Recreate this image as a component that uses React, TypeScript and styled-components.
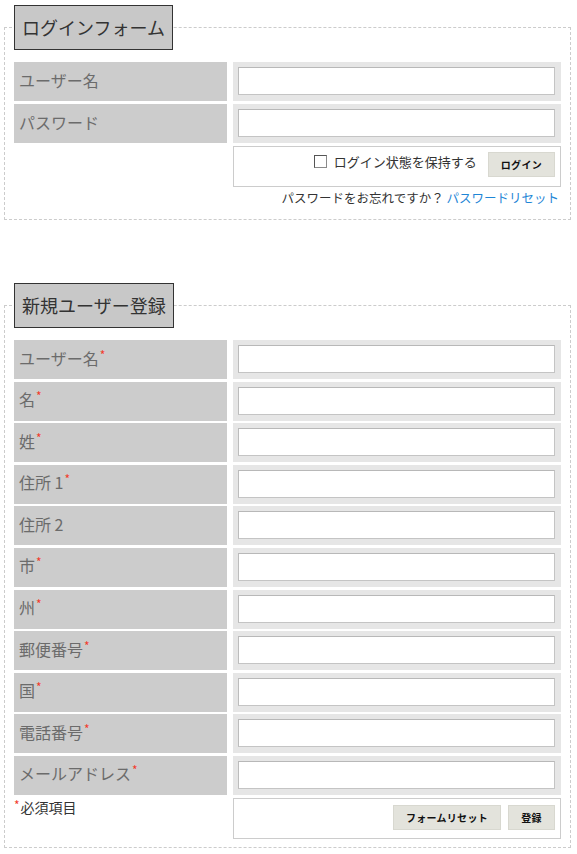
import React from "react";
import styled, { createGlobalStyle } from "styled-components";

const GlobalStyle = createGlobalStyle`
  html, body {
    margin: 0;
    padding: 0;
    background: #ffffff;
  }
  body {
    font-family: "Noto Sans CJK JP", "Noto Sans", sans-serif;
    color: #333333;
  }
`;

interface Field {
  label: string;
  required?: boolean;
}

const registerFields: Field[] = [
  { label: "ユーザー名", required: true },
  { label: "名", required: true },
  { label: "姓", required: true },
  { label: "住所 1", required: true },
  { label: "住所 2" },
  { label: "市", required: true },
  { label: "州", required: true },
  { label: "郵便番号", required: true },
  { label: "国", required: true },
  { label: "電話番号", required: true },
  { label: "メールアドレス", required: true },
];

const App = () => {
  return (
    <Page>
      <GlobalStyle />
      <FormBox $bottom={12}>
        <Legend>ログインフォーム</Legend>
        <Rows $gap={3}>
          <Row>
            <LabelCell>ユーザー名</LabelCell>
            <InputCell>
              <TextInput type="text" />
            </InputCell>
          </Row>
          <Row>
            <LabelCell>パスワード</LabelCell>
            <InputCell>
              <TextInput type="password" />
            </InputCell>
          </Row>
          <Row $auto>
            <div />
            <ActionBox>
              <CheckLabel>
                <CheckBox />
                ログイン状態を保持する
              </CheckLabel>
              <Button>ログイン</Button>
            </ActionBox>
          </Row>
        </Rows>
        <Forgot>
          パスワードをお忘れですか？ <ResetLink href="#">パスワードリセット</ResetLink>
        </Forgot>
      </FormBox>

      <FormBox $bottom={8} $top={63}>
        <Legend>新規ユーザー登録</Legend>
        <Rows $gap={2.6}>
          {registerFields.map((field) => (
            <Row key={field.label}>
              <LabelCell>
                <span>
                  {field.label}
                  {field.required && <Star>*</Star>}
                </span>
              </LabelCell>
              <InputCell>
                <TextInput type="text" />
              </InputCell>
            </Row>
          ))}
          <Row $auto>
            <Note>
              <Star>*</Star>必須項目
            </Note>
            <ActionBox $pad={6}>
              <Button>フォームリセット</Button>
              <Button>登録</Button>
            </ActionBox>
          </Row>
        </Rows>
      </FormBox>
    </Page>
  );
};

const Page = styled.div`
  padding: 5px 6px 0 4px;
  width: 577px;
  box-sizing: border-box;
`;

const FormBox = styled.fieldset<{ $bottom: number; $top?: number }>`
  margin: ${(p) => p.$top ?? 0}px 0 0 0;
  padding: 12px 9px ${(p) => p.$bottom}px 9px;
  border: 1px dashed #cccccc;
  min-width: 0;
`;

const Legend = styled.legend`
  padding: 0 7px;
  margin: 0;
  height: 45px;
  box-sizing: border-box;
  line-height: 42px;
  background: #c8c8c8;
  border: 1px solid #333333;
  font-size: 18px;
  color: #333333;
`;

const Rows = styled.div<{ $gap: number }>`
  display: flex;
  flex-direction: column;
  gap: ${(p) => p.$gap}px;
`;

const Row = styled.div<{ $auto?: boolean }>`
  display: grid;
  grid-template-columns: 213px 1fr;
  column-gap: 6px;
  height: ${(p) => (p.$auto ? "auto" : "39px")};
`;

const LabelCell = styled.div`
  background: #cccccc;
  display: flex;
  align-items: center;
  padding: 0 0 4px 5px;
  font-size: 16px;
  line-height: 20px;
  color: #6b6b6b;
`;

const Star = styled.span`
  color: #f23c2c;
  font-size: 12px;
  line-height: 1;
  position: relative;
  top: -5px;
  margin-left: 1px;
`;

const InputCell = styled.div`
  background: #e6e6e6;
  padding: 5px 6px 6px 5px;
  display: flex;
`;

const TextInput = styled.input`
  flex: 1;
  height: 28px;
  box-sizing: border-box;
  margin: 0;
  border: 1px solid #c4c4c4;
  border-top-color: #b8b8b8;
  border-left-color: #bcbcbc;
  background: #ffffff;
  outline: none;
  font-size: 14px;
`;

const ActionBox = styled.div<{ $pad?: number }>`
  background: #ffffff;
  border: 1px solid #cccccc;
  display: flex;
  justify-content: flex-end;
  align-items: flex-start;
  gap: 7px;
  padding: ${(p) => p.$pad ?? 5}px 5px ${(p) => (p.$pad ? 8 : 9)}px 5px;
`;

const CheckLabel = styled.label`
  display: flex;
  align-items: center;
  gap: 7px;
  font-size: 13px;
  color: #333333;
  height: 25px;
  margin-right: 4px;
  margin-top: -3px;
`;

const CheckBox = styled.span`
  width: 11px;
  height: 11px;
  border: 1px solid #8a8a8a;
  border-top-color: #555555;
  border-left-color: #555555;
  background: #ffffff;
`;

const Button = styled.button`
  height: 25px;
  min-width: 47px;
  padding: 0 12px;
  margin: 0;
  background: #e3e3dc;
  border: 1px solid #d8d8d0;
  font-family: "Noto Sans CJK JP", sans-serif;
  font-size: 10px;
  font-weight: bold;
  color: #111111;
  letter-spacing: 0.3px;
`;

const Forgot = styled.div`
  text-align: right;
  font-size: 12.5px;
  line-height: 18px;
  margin-top: 2px;
  padding-right: 2px;
  color: #333333;
`;

const ResetLink = styled.a`
  color: #1f86d6;
  text-decoration: none;
`;

const Note = styled.div`
  font-size: 14px;
  color: #333333;
  line-height: 18px;

  ${Star} {
    top: -3px;
    margin: 0 1px 0 0;
  }
`;

export default App;
